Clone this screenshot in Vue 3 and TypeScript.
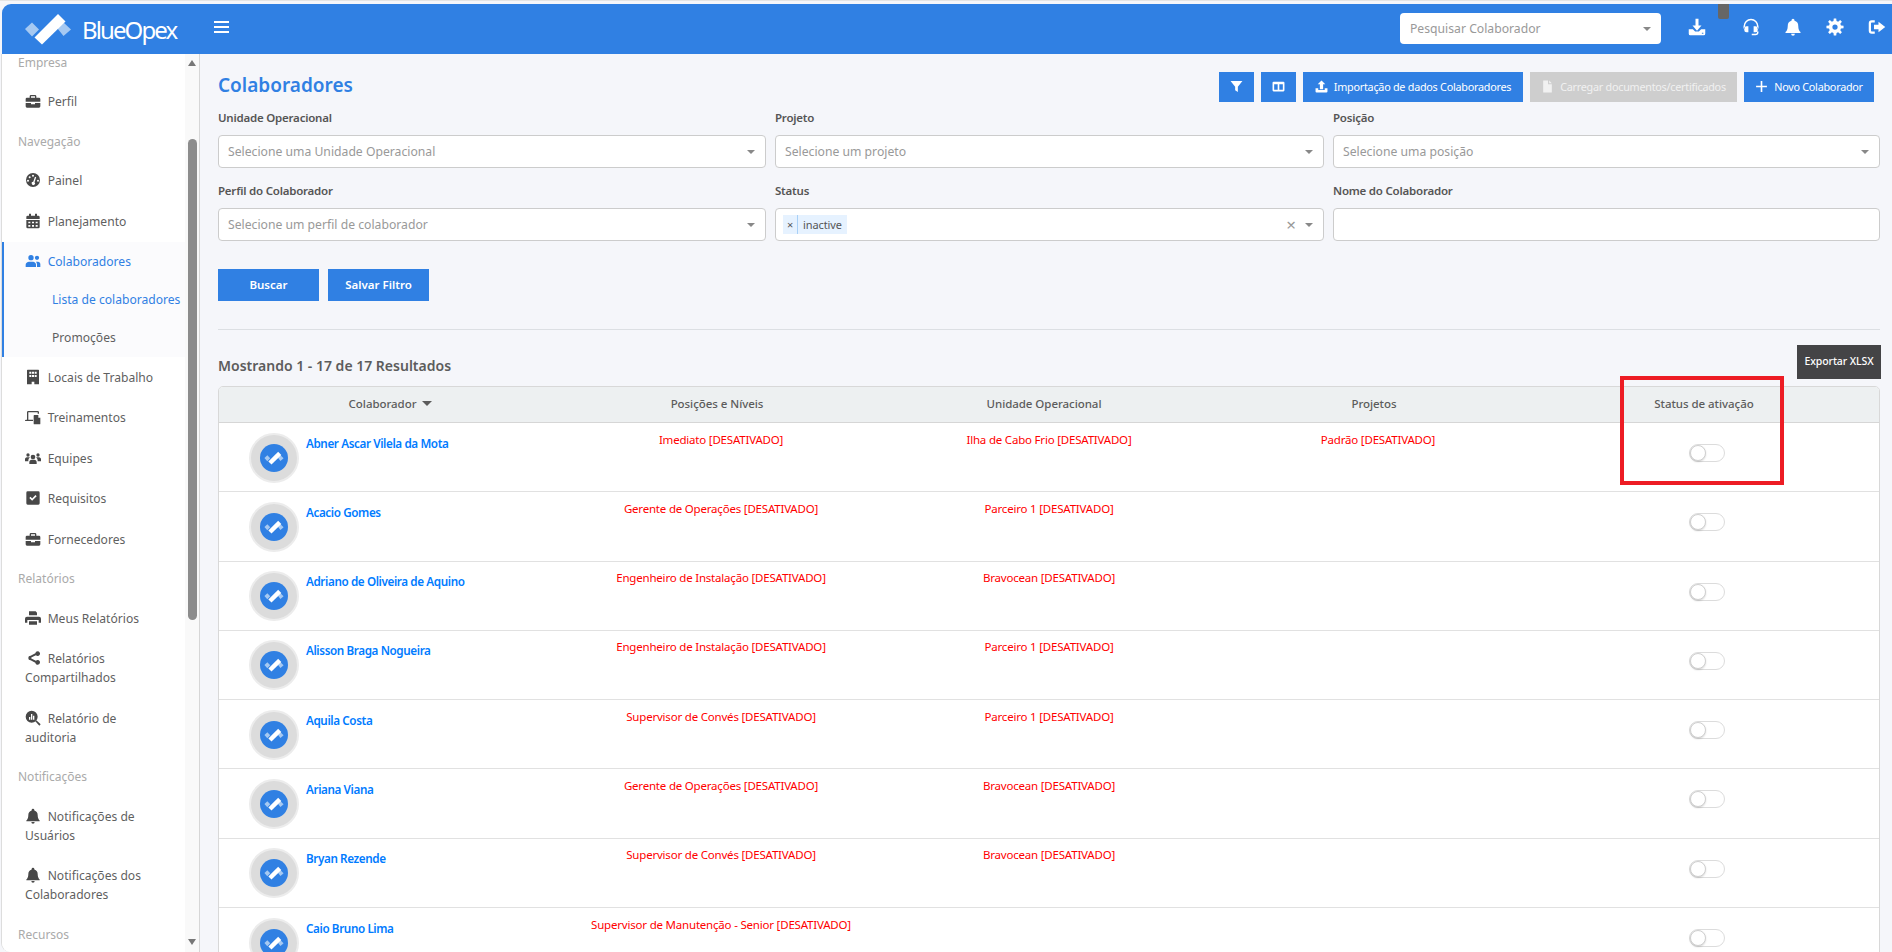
<template>
  <div class="shell">
    <header class="topbar">
      <div class="brand">
        <svg class="brand__logo" viewBox="24 13 48 32">
          <path class="pale" d="M25 29l7-6.500 7 7-7 7z" />
          <path class="pale" d="M57.500 28.500l6-6 7.500 7-7.500 6.500z" />
          <path fill="#fff" d="M34.500 37.500L58 14l7.500 7.500L42 44.500z" />
        </svg>
        <span class="brand__name">BlueOpex</span>
      </div>
      <button class="burger" type="button"><i></i><i></i><i></i></button>
      <div class="search">
        <span>Pesquisar Colaborador</span>
        <b class="caret"></b>
      </div>
      <nav class="top-icons">
        <svg class="ico first" viewBox="0 0 24 24"><path :d="icons.download" /></svg>
        <svg class="ico nz" viewBox="0 0 24 24"><path :d="icons.headset" /></svg>
        <svg class="ico" viewBox="0 0 24 24"><path :d="icons.bell" /></svg>
        <svg class="ico" viewBox="0 0 24 24"><path :d="gear" /></svg>
        <svg class="ico" viewBox="0 0 24 24"><path :d="icons.logout" /></svg>
      </nav>
      <span class="top-tab"></span>
    </header>

    <div class="body">
      <aside class="sidebar">
        <ul class="side-list">
          <template v-for="entry in menu" :key="entry.label">
            <li v-if="entry.section" class="side-section">{{ entry.label }}</li>
            <li v-else class="side-item" :class="{ 'is-open': entry.open }">
              <div class="side-link">
                <svg class="ico ico--side" viewBox="0 0 24 24"><path :d="entry.icon ? icons[entry.icon] : ''" /></svg>
                {{ entry.label }}
              </div>
              <template v-if="entry.open">
                <div class="side-sub side-sub--on">Lista de colaboradores</div>
                <div class="side-sub">Promoções</div>
              </template>
            </li>
          </template>
        </ul>
        <div class="side-bar">
          <b class="arrow arrow--up"></b>
          <span class="side-thumb"></span>
          <b class="arrow arrow--down"></b>
        </div>
      </aside>

      <main class="main">
        <div class="title-row">
          <h1>Colaboradores</h1>
          <div class="actions">
            <button class="btn btn--icon" type="button">
              <svg class="ico ico--btn" viewBox="0 0 24 24"><path :d="icons.filter" /></svg>
            </button>
            <button class="btn btn--icon" type="button">
              <svg class="ico ico--btn" viewBox="0 0 24 24"><path :d="icons.columns" /></svg>
            </button>
            <button class="btn btn--import" type="button">
              <svg class="ico ico--btn" viewBox="0 0 24 24"><path :d="icons.upload" /></svg>
              Importação de dados Colaboradores
            </button>
            <button class="btn btn--off" type="button">
              <svg class="ico ico--btn" viewBox="0 0 24 24"><path :d="icons.file" /></svg>
              Carregar documentos/certificados
            </button>
            <button class="btn btn--new" type="button">
              <svg class="ico ico--btn" viewBox="0 0 24 24"><path :d="icons.plus" /></svg>
              Novo Colaborador
            </button>
          </div>
        </div>

        <section class="filters">
          <div v-for="f in filters" :key="f.label" class="field">
            <label>{{ f.label }}</label>
            <div class="select">
              <template v-if="f.tag">
                <span class="chip"><em>×</em><span>{{ f.tag }}</span></span>
                <span class="clear">×</span>
              </template>
              <span v-else-if="f.placeholder" class="placeholder">{{ f.placeholder }}</span>
              <b v-if="f.placeholder || f.tag" class="caret"></b>
            </div>
          </div>
        </section>

        <div class="form-buttons">
          <button class="btn btn--form" type="button">Buscar</button>
          <button class="btn btn--form" type="button">Salvar Filtro</button>
        </div>

        <hr class="divider" />

        <div class="results">
          <h2>Mostrando 1 - 17 de 17 Resultados</h2>
          <button class="btn btn--export" type="button">Exportar XLSX</button>
        </div>

        <div class="table">
          <div class="tb-head">
            <div>Colaborador <b class="caret caret--dark"></b></div>
            <div>Posições e Níveis</div>
            <div>Unidade Operacional</div>
            <div>Projetos</div>
            <div class="tb-head__status">Status de ativação</div>
          </div>
          <div v-for="row in rows" :key="row.name" class="tb-row">
            <div class="cell-name">
              <span class="avatar">
                <span class="avatar__disc">
                  <svg viewBox="24 13 48 32">
                    <path class="pale" d="M25 29l7-6.500 7 7-7 7z" />
                    <path class="pale" d="M57.500 28.500l6-6 7.500 7-7.500 6.500z" />
                    <path fill="#fff" d="M34.500 37.500L58 14l7.500 7.500L42 44.500z" />
                  </svg>
                </span>
              </span>
              <a href="#">{{ row.name }}</a>
            </div>
            <div class="cell-off">{{ off(row.position) }}</div>
            <div class="cell-off">{{ off(row.unit) }}</div>
            <div class="cell-off">{{ off(row.project) }}</div>
            <div class="cell-toggle"><span class="toggle"><i></i></span></div>
          </div>
          <div class="callout"></div>
        </div>
      </main>
    </div>
  </div>
</template>

<script setup lang="ts">
interface MenuEntry {
  label: string;
  section?: boolean;
  icon?: string;
  open?: boolean;
}

interface Row {
  name: string;
  position: string;
  unit?: string;
  project?: string;
}

const icons: Record<string, string> = {
  download:
    'M10 1h4v9h4l-6 7-6-7h4z M1 15h5.500l3 3h5l3-3H23v6a2 2 0 0 1-2 2H3a2 2 0 0 1-2-2z M18.500 19.500h2V21h-2z',
  headset:
    'M12 1a10 10 0 0 0-10 10v3h2v-3a8 8 0 0 1 16 0v3h2v-3A10 10 0 0 0 12 1z M6 11h2.500v8H6a3 3 0 0 1-3-3v-2a3 3 0 0 1 3-3z M15.500 11H18a3 3 0 0 1 3 3v2a3 3 0 0 1-3 3h-2.500z M20 18h2v1a4 4 0 0 1-4 4h-5v-2h5a2 2 0 0 0 2-2z',
  bell: 'M12 1a2 2 0 0 1 2 2v.7a7 7 0 0 1 5 6.800c0 5 1.500 6.600 3 8.200V20H2v-1.300c1.500-1.600 3-3.200 3-8.200a7 7 0 0 1 5-6.800V3a2 2 0 0 1 2-2z M9.500 21h5a2.500 2.500 0 0 1-5 0z',
  logout:
    'M9 3v3H5a1 1 0 0 0-1 1v10a1 1 0 0 0 1 1h4v3H5a4 4 0 0 1-4-4V7a4 4 0 0 1 4-4z M14 5l9 7-9 7v-4H8V9h6z',
  filter: 'M1 2h22l-8.500 10.500V22l-5-3v-6.500z',
  columns:
    'M3 3h18a2 2 0 0 1 2 2v14a2 2 0 0 1-2 2H3a2 2 0 0 1-2-2V5a2 2 0 0 1 2-2z M4 8v10h6.500V8z M13.500 8v10H20V8z',
  upload:
    'M12 1l7 7h-4v9H9V8H5z M1 15h5v3.500h12V15h5v6a2 2 0 0 1-2 2H3a2 2 0 0 1-2-2z',
  file: 'M4 1h9v7h7v15H4z M15 1l5 5h-5z',
  plus: 'M10.500 2h3v8.500H22v3h-8.500V22h-3v-8.500H2v-3h8.500z',
  briefcase:
    'M9 3h6a2 2 0 0 1 2 2v2h4a2 2 0 0 1 2 2v4H1V9a2 2 0 0 1 2-2h4V5a2 2 0 0 1 2-2z M9 5v2h6V5z M1 15h8v2h6v-2h8v5a2 2 0 0 1-2 2H3a2 2 0 0 1-2-2z',
  gauge:
    'M12 1.500a10.500 10.500 0 1 0 0 21 10.500 10.500 0 0 0 0-21z M12 4a1.500 1.500 0 1 1 0 3 1.500 1.500 0 0 1 0-3z M7 6.500a1.500 1.500 0 1 1 0 3 1.500 1.500 0 0 1 0-3z M4.500 11.500a1.500 1.500 0 1 1 0 3 1.500 1.500 0 0 1 0-3z M19.500 11.500a1.500 1.500 0 1 1 0 3 1.500 1.500 0 0 1 0-3z M15 7l1.800.7-2.500 7.500a2.500 2.500 0 1 1-1.900-.7z',
  calendar:
    'M6 1h3v3h6V1h3v3h2a2 2 0 0 1 2 2v3H2V6a2 2 0 0 1 2-2h2z M2 10.500h20V21a2 2 0 0 1-2 2H4a2 2 0 0 1-2-2z M5 13v2.500h3V13z M10.500 13v2.500h3V13z M16 13v2.500h3V13z M5 18v2.500h3V18z M10.500 18v2.500h3V18z M16 18v2.500h3V18z',
  users:
    'M9 3a4 4 0 1 1 0 8 4 4 0 0 1 0-8z M18 4a3.200 3.200 0 1 1 0 6.400 3.200 3.200 0 0 1 0-6.400z M1 21v-3.500C1 15 3.500 13 6 13h6c2.500 0 4.500 2 4.500 4.500V21z M18 21v-3.500c0-1.600-.6-3-1.600-4.200.5-.2 1-.3 1.600-.3h1.500c2 0 3.500 1.700 3.500 3.800V21z',
  building:
    'M4 1h16a1 1 0 0 1 1 1v21h-7v-4h-4v4H3V2a1 1 0 0 1 1-1z M6.500 4v3h3V4z M10.500 4v3h3V4z M14.500 4v3h3V4z M6.500 9v3h3V9z M10.500 9v3h3V9z M14.500 9v3h3V9z',
  laptop:
    'M5 3h14a2 2 0 0 1 2 2v2h-2V5H5v11h7v2H0v-.5A1.500 1.500 0 0 1 1.500 16H3V5a2 2 0 0 1 2-2z M14 9h6v4h3v9a1 1 0 0 1-1 1h-8a1 1 0 0 1-1-1V10a1 1 0 0 1 1-1z',
  team:
    'M12 7a3.500 3.500 0 1 1 0 7 3.500 3.500 0 0 1 0-7z M4.500 5a2.500 2.500 0 1 1 0 5 2.500 2.500 0 0 1 0-5z M19.500 5a2.500 2.500 0 1 1 0 5 2.500 2.500 0 0 1 0-5z M0 17v-3c0-1.500 1-3 3-3h3c.5 0 1 .1 1.300.4C5.500 12.500 5 14.500 5 17z M24 17v-3c0-1.500-1-3-3-3h-3c-.5 0-1 .1-1.300.4 1.800 1.100 2.300 3.100 2.300 5.600z M6.500 21v-3c0-2 1.500-3.500 3.500-3.500h4c2 0 3.500 1.500 3.500 3.500v3z',
  check:
    'M4 2h16a2 2 0 0 1 2 2v16a2 2 0 0 1-2 2H4a2 2 0 0 1-2-2V4a2 2 0 0 1 2-2z M6.500 12l1.800-1.800 2.400 2.400 5-5L17.500 9.400l-6.800 6.800z',
  printer:
    'M6 2h10l2 2v4H6z M3 10h18a3 3 0 0 1 3 3v6h-3.500v-4h-17v4H0v-6a3 3 0 0 1 3-3z M6 17h12v5H6z',
  share:
    'M19 2a3.500 3.500 0 1 1-2.600 5.800l-7 3.500a3.500 3.500 0 0 1 0 1.400l7 3.500A3.500 3.500 0 1 1 15.500 19l-7.100-3.500a3.500 3.500 0 1 1 0-7l7.100-3.500A3.500 3.500 0 0 1 19 2z',
  audit:
    'M10 1a9 9 0 1 1 0 18 9 9 0 0 1 0-18z M6 10.500v4h2v-4z M9 6v8.500h2V6z M12 8.500v6h2v-6z M17 15.500l6.500 6-2 2-6-6.500z',
  bell2:
    'M12 1a2 2 0 0 1 2 2v.7a7 7 0 0 1 5 6.800c0 5 1.500 6.600 3 8.200V20H2v-1.300c1.500-1.600 3-3.200 3-8.200a7 7 0 0 1 5-6.800V3a2 2 0 0 1 2-2z M9.500 21h5a2.500 2.500 0 0 1-5 0z'
};

function buildGear(): string {
  const pts: string[] = [];
  const teeth = 8;
  for (let i = 0; i < teeth; i++) {
    const a = (i / teeth) * Math.PI * 2;
    const step = (Math.PI * 2) / teeth;
    const at = (r: number, t: number) =>
      `${(12 + r * Math.cos(t)).toFixed(2)} ${(12 + r * Math.sin(t)).toFixed(2)}`;
    pts.push(at(8.2, a - step * 0.32), at(11.5, a - step * 0.18), at(11.5, a + step * 0.18), at(8.2, a + step * 0.32));
  }
  return `M${pts.join('L')}z M12 8.500a3.500 3.500 0 1 1 0 7 3.500 3.500 0 0 1 0-7z`;
}

const gear = buildGear();

const menu: MenuEntry[] = [
  { label: 'Empresa', section: true },
  { label: 'Perfil', icon: 'briefcase' },
  { label: 'Navegação', section: true },
  { label: 'Painel', icon: 'gauge' },
  { label: 'Planejamento', icon: 'calendar' },
  { label: 'Colaboradores', icon: 'users', open: true },
  { label: 'Locais de Trabalho', icon: 'building' },
  { label: 'Treinamentos', icon: 'laptop' },
  { label: 'Equipes', icon: 'team' },
  { label: 'Requisitos', icon: 'check' },
  { label: 'Fornecedores', icon: 'briefcase' },
  { label: 'Relatórios', section: true },
  { label: 'Meus Relatórios', icon: 'printer' },
  { label: 'Relatórios Compartilhados', icon: 'share' },
  { label: 'Relatório de auditoria', icon: 'audit' },
  { label: 'Notificações', section: true },
  { label: 'Notificações de Usuários', icon: 'bell2' },
  { label: 'Notificações dos Colaboradores', icon: 'bell2' },
  { label: 'Recursos', section: true }
];

const filters = [
  { label: 'Unidade Operacional', placeholder: 'Selecione uma Unidade Operacional' },
  { label: 'Projeto', placeholder: 'Selecione um projeto' },
  { label: 'Posição', placeholder: 'Selecione uma posição' },
  { label: 'Perfil do Colaborador', placeholder: 'Selecione um perfil de colaborador' },
  { label: 'Status', tag: 'inactive' },
  { label: 'Nome do Colaborador' }
];

const rows: Row[] = [
  { name: 'Abner Ascar Vilela da Mota', position: 'Imediato', unit: 'Ilha de Cabo Frio', project: 'Padrão' },
  { name: 'Acacio Gomes', position: 'Gerente de Operações', unit: 'Parceiro 1' },
  { name: 'Adriano de Oliveira de Aquino', position: 'Engenheiro de Instalação', unit: 'Bravocean' },
  { name: 'Alisson Braga Nogueira', position: 'Engenheiro de Instalação', unit: 'Parceiro 1' },
  { name: 'Aquila Costa', position: 'Supervisor de Convés', unit: 'Parceiro 1' },
  { name: 'Ariana Viana', position: 'Gerente de Operações', unit: 'Bravocean' },
  { name: 'Bryan Rezende', position: 'Supervisor de Convés', unit: 'Bravocean' },
  { name: 'Caio Bruno Lima', position: 'Supervisor de Manutenção - Senior' }
];

function off(value?: string) {
  return value ? `${value} [DESATIVADO]` : '';
}
</script>

<style>
html,
body {
  margin: 0;
  background: #fff;
  overflow: hidden;
}
</style>

<style scoped>
.shell {
  height: 100vh;
  box-sizing: border-box;
  padding: 3px 0 0 1px;
  display: flex;
  flex-direction: column;
  overflow: hidden;
  font-family: 'Noto Sans', 'Open Sans', sans-serif;
  font-size: 12.2px;
  color: #5c5c5c;
  background: #f5f6fa;
  border-top: 1px solid #e4e4e4;
}

.topbar {
  position: relative;
  flex: 0 0 50px;
  display: flex;
  align-items: center;
  margin-left: 1px;
  background: #3080e3;
  border-top-left-radius: 9px;
  color: #fff;
}

.brand {
  display: flex;
  align-items: center;
  box-sizing: border-box;
  width: 212px;
  padding-left: 22px;
}

.brand__logo {
  width: 48px;
  height: 32px;
}

.pale {
  fill: #a6c9f2;
}

.brand__name {
  margin-left: 10px;
  font-size: 24px;
  letter-spacing: -1.9px;
}

.burger {
  display: flex;
  flex-direction: column;
  gap: 3px;
  width: 15px;
  margin-top: -4px;
  padding: 0;
  border: 0;
  background: none;
}

.burger i {
  height: 2px;
  background: #fff;
}

.search {
  display: flex;
  align-items: center;
  justify-content: space-between;
  box-sizing: border-box;
  width: 261px;
  height: 31px;
  margin-left: auto;
  margin-top: -1px;
  padding: 0 10px;
  background: #fff;
  border-radius: 4px;
  color: #999;
}

.caret {
  width: 0;
  height: 0;
  border-left: 4px solid transparent;
  border-right: 4px solid transparent;
  border-top: 4.5px solid #888;
}

.caret--dark {
  display: inline-block;
  margin-left: 3px;
  vertical-align: 2px;
  border-left-width: 5px;
  border-right-width: 5px;
  border-top: 5px solid #5c5c5c;
}

.top-icons {
  display: flex;
  align-items: center;
  gap: 24px;
  margin: -4px 6px 0 27px;
}

.ico {
  width: 18px;
  height: 18px;
  fill: currentColor;
  fill-rule: evenodd;
  flex: none;
}

.first {
  margin-right: 12px;
}

.nz {
  fill-rule: nonzero;
}

.top-tab {
  position: absolute;
  top: 0;
  left: 1716px;
  width: 11px;
  height: 15px;
  background: #666;
  border-radius: 0 0 2px 2px;
}

.body {
  flex: 1;
  min-height: 0;
  display: flex;
}

.sidebar {
  flex: 0 0 199px;
  display: flex;
  box-sizing: border-box;
  border-left: 1px solid #ddd;
  border-right: 1px solid #d6d6d6;
  border-bottom-left-radius: 9px;
  background: #f9f9f9;
  overflow: hidden;
}

.side-list {
  flex: 0 0 183px;
  margin: -11px 0 0;
  padding: 0;
  list-style: none;
  background: #fff;
  font-size: 12.1px;
  line-height: 19px;
}

.side-section {
  display: flex;
  align-items: center;
  height: 38.5px;
  padding-left: 16px;
  color: #aaa;
  font-size: 12px;
}

.side-item {
  border-left: 2px solid transparent;
}

.side-link {
  padding: 10.75px 28px 10.75px 21px;
  color: #5f5f5f;
}

.ico--side {
  width: 16px;
  height: 16px;
  margin-right: 3.5px;
  vertical-align: -3px;
  color: #484848;
}

.is-open {
  border-left-color: #3080e3;
  background: #fbfbfd;
}

.is-open .side-link,
.is-open .ico--side {
  color: #3080e3;
}

.side-sub {
  height: 37.5px;
  padding-left: 48px;
  line-height: 36px;
  color: #5f5f5f;
}

.side-sub--on {
  color: #3080e3;
}

.side-bar {
  flex: 1;
  position: relative;
  display: flex;
  flex-direction: column;
  align-items: center;
}

.side-thumb {
  width: 9px;
  height: 481px;
  margin-top: 85px;
  background: #8c8c8c;
  border-radius: 5px;
}

.arrow {
  position: absolute;
  width: 0;
  height: 0;
  border-left: 4px solid transparent;
  border-right: 4px solid transparent;
}

.arrow--up {
  top: 6px;
  border-bottom: 6px solid #777;
}

.arrow--down {
  top: 885px;
  border-top: 6px solid #777;
}

.main {
  flex: 1;
  min-width: 0;
  box-sizing: border-box;
  padding: 18px 12px 0 18px;
  overflow: hidden;
}

.title-row {
  display: flex;
  justify-content: space-between;
  height: 30px;
}

h1 {
  margin: 0;
  font-size: 19px;
  font-weight: 600;
  line-height: 26px;
  color: #3080e3;
}

.actions {
  display: flex;
  gap: 7px;
  margin-right: 6px;
}

.btn {
  display: flex;
  align-items: center;
  justify-content: center;
  border: 0;
  border-radius: 0;
  padding: 0 0 2px;
  background: #3080e3;
  color: #fff;
  font-family: inherit;
  font-size: 10.8px;
  letter-spacing: -0.25px;
  cursor: pointer;
}

.btn--icon {
  width: 35px;
}

.ico--btn {
  width: 13px;
  height: 13px;
}

.btn--import {
  width: 220px;
  gap: 6px;
}

.btn--off {
  width: 207px;
  gap: 6px;
  background: #cecece;
  color: #f1f1f1;
}

.btn--new {
  width: 130px;
  gap: 6px;
}

.filters {
  display: grid;
  grid-template-columns: 548px 549px 1fr;
  gap: 0 9px;
}

.field {
  height: 73px;
  padding-top: 8px;
  box-sizing: border-box;
}

.field label {
  display: block;
  height: 17px;
  line-height: 16px;
  font-size: 11.5px;
  font-weight: 600;
  letter-spacing: -0.22px;
  color: #555;
}

.select {
  display: flex;
  align-items: center;
  gap: 9px;
  box-sizing: border-box;
  height: 33px;
  margin-top: 8px;
  padding: 0 10px 0 9px;
  background: #fff;
  border: 1px solid #ccc;
  border-radius: 4px;
}

.placeholder {
  flex: 1;
  color: #999;
}

.chip {
  display: flex;
  align-items: stretch;
  height: 19px;
  margin-left: -2px;
  background: #e6f2ff;
  font-size: 11px;
  letter-spacing: -0.1px;
  line-height: 19px;
  color: #555;
}

.chip em {
  width: 14px;
  border-right: 1px solid #a8d0f7;
  font-style: normal;
  text-align: center;
}

.chip span {
  padding: 0 5px;
}

.clear {
  margin-left: auto;
  font-size: 17px;
  line-height: 1;
  color: #999;
}

.form-buttons {
  display: flex;
  gap: 9px;
  margin-top: 21px;
}

.btn--form {
  width: 101px;
  height: 32px;
  font-size: 11.5px;
  letter-spacing: 0;
  font-weight: 600;
}

.divider {
  margin: 28px 0 0;
  border: 0;
  border-top: 1px solid #dcdfe3;
}

.results {
  display: flex;
  justify-content: space-between;
  height: 34px;
  margin-top: 15px;
  margin-bottom: 7px;
}

h2 {
  margin: 11px 0 0;
  font-size: 14px;
  font-weight: 600;
  line-height: 20px;
  color: #5c5c5c;
}

.btn--export {
  width: 84px;
  margin-right: -1px;
  background: #444446;
  font-size: 10.5px;
  letter-spacing: -0.1px;
  font-weight: 500;
}

.table {
  position: relative;
  background: #fff;
  border: 1px solid #d8d8d8;
  border-radius: 5px 5px 0 0;
}

.tb-head {
  display: grid;
  grid-template-columns: 343px 310px 344px 316px 1fr;
  height: 36px;
  padding-bottom: 3px;
  box-sizing: border-box;
  align-items: center;
  text-align: center;
  background: #edf0f1;
  border-bottom: 1px solid #d6d6d6;
  border-radius: 4px 4px 0 0;
  font-size: 11.5px;
  font-weight: 500;
  letter-spacing: -0.05px;
}

.tb-head__status {
  padding-right: 3px;
}

.tb-row {
  display: grid;
  grid-template-columns: 343px 318px 338px 320px 1fr;
  box-sizing: border-box;
  height: 69.3px;
  border-bottom: 1px solid #e1e1e1;
}

.cell-name {
  display: flex;
  align-items: flex-start;
  padding: 9.5px 0 0 30px;
}

.cell-name a {
  margin: 0 0 0 7px;
  font-size: 11.7px;
  font-weight: 600;
  letter-spacing: -0.4px;
  line-height: 20px;
  color: #007bff;
  text-decoration: none;
}

.avatar {
  display: flex;
  align-items: center;
  justify-content: center;
  box-sizing: border-box;
  width: 50px;
  height: 50px;
  background: #dcdcdc;
  border: 2px solid #ececec;
  border-radius: 50%;
}

.avatar__disc {
  display: flex;
  align-items: center;
  justify-content: center;
  width: 28px;
  height: 28px;
  background: #3080e3;
  border-radius: 50%;
}

.avatar__disc svg {
  width: 20px;
  height: 14px;
}

.cell-off {
  padding-top: 7.5px;
  text-align: center;
  line-height: 18px;
  font-size: 11.5px;
  letter-spacing: -0.2px;
  color: #f00;
}

.cell-toggle {
  display: flex;
  justify-content: center;
  padding: 21px 4px 0 0;
}

.toggle {
  display: block;
  box-sizing: border-box;
  width: 36px;
  height: 18px;
  background: #fff;
  border: 1px solid #dcdcdc;
  border-radius: 9px;
}

.toggle i {
  display: block;
  box-sizing: border-box;
  width: 16px;
  height: 16px;
  background: #fff;
  border: 1px solid #cfcfcf;
  border-radius: 50%;
  box-shadow: 0 1px 2px rgba(0, 0, 0, 0.15);
}

.callout {
  position: absolute;
  top: -11px;
  left: 1401px;
  box-sizing: border-box;
  width: 164px;
  height: 109px;
  border: 4px solid #ed1c24;
  pointer-events: none;
}
</style>
